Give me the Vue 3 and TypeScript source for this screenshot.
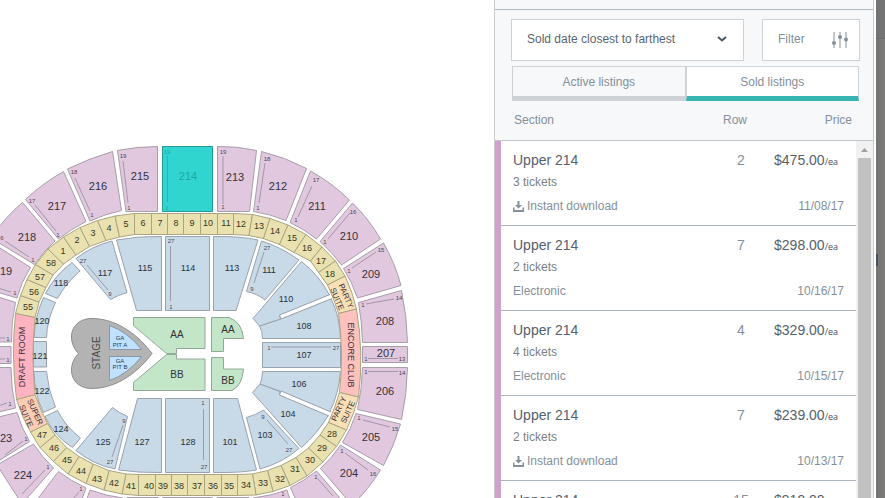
<script setup lang="ts">
import { ref } from 'vue'

type Point = [number, number]
type Kind = 'upper' | 'suite' | 'lower' | 'floor'
interface Label { text: string; x: number; y: number; kind: Kind | 'seat' | 'lounge' | 'club' | 'hall' | 'pit'; turn?: number }
interface Listing { section: string; tickets: string; delivery: string; row: number; price: string; date: string }

const sort = ref('Sold date closest to farthest')
const tab = ref<'active' | 'sold'>('sold')

const listings: Listing[] = [
  { section: 'Upper 214', tickets: '3 tickets', delivery: 'Instant download', row: 2, price: '$475.00', date: '11/08/17' },
  { section: 'Upper 214', tickets: '2 tickets', delivery: 'Electronic', row: 7, price: '$298.00', date: '10/16/17' },
  { section: 'Upper 214', tickets: '4 tickets', delivery: 'Electronic', row: 4, price: '$329.00', date: '10/15/17' },
  { section: 'Upper 214', tickets: '2 tickets', delivery: 'Instant download', row: 7, price: '$239.00', date: '10/13/17' },
  { section: 'Upper 214', tickets: '2 tickets', delivery: 'Electronic', row: 15, price: '$919.00', date: '10/12/17' },
]

const upper: string[] = [
  'M117.5 150.5Q137 146.5 157.5 146.5V211.5H126Z',
  'M67.5 169Q90 158 112.5 151.5L121.5 210.5Q105 214 90 221Z',
  'M25.5 199.5Q43 183 63.5 171.5L86 221.5Q71 229 58.5 239Z',
  'M22.5 202.5L55 241Q43 252 34.5 264.5L-9 238Q5 217 22.5 202.5Z',
  'M-14 241L0 248L30.5 267.5Q21 282 17 298L-10 290Z',
  'M-10 294L0 297.5L15.5 302.5Q11 322 11.5 342H-10Z',
  'M-10 346.5H11V363.5H-10Z',
  'M-10 367.5H11Q11 388 15.5 408L-10 414Z',
  'M-10 419L17 412.5Q21 427 29.5 441.5L-3 462Z',
  'M33.5 444Q42 457 53.5 468L22 504L-3 465Z',
  'M58.5 471.5Q71 481 86 488L80 505H33Z',
  'M90 490Q106 496 123 498V510H83Z',
  'M127 497.5H158V510H127Z',
  'M162.5 497.5H212.5V510H162.5Z',
  'M217.5 497.5H249V510H217.5Z',
  'M253 498Q270 496 287 490L293 510H253Z',
  'M290.5 487.5Q304 481 316.5 471L346 505H298Z',
  'M340.5 445L380.5 470Q369 489 352 505L320.5 468.5Q332 458 340.5 445Z',
  'M356 413.5L400.5 424Q394 446 383.5 465.5L342.5 442.5Q351 429 356 413.5Z',
  'M362.5 367.5H407.5Q407 394 401.5 419.5L357.5 409.5Q362 389 362.5 367.5Z',
  'M362.5 346.5H407.5V362.5H362.5Z',
  'M401.5 290.5Q407 316 407.5 342.5H362.5Q362 322 358.5 302.5Z',
  'M383.5 243Q395 263 401 285.5L357.5 298Q352 282 343.5 268.5Z',
  'M352.5 203Q369 219 380.5 239L341.5 265Q332 252 320 241.5Z',
  'M310.5 171Q332 183 349.5 200L316.5 239Q304 229 290 222.5Z',
  'M261.5 151.5Q285 157 306.5 168.5L286 220.5Q270 214 253.5 211.5Z',
  'M217.5 146.5Q237 146 256.5 150.5L249.5 211.5H217.5Z',
]

const lower: string[] = [
  'M116.5 240Q138 236 161.5 236.5V310.5H136.5Z',
  'M165.5 236.5H209.5V310.5H165.5Z',
  'M213.5 236.5Q240 236 258 240L236 310.5H213.5Z',
  'M76 258.5Q92 246 112 241L127 292.5Q118 295 110.5 299.5Z',
  'M72 262.5L80 271Q66 283 57.5 298.5L45.5 293.5Q55 275 72 262.5Z',
  'M43.5 297.5L55.5 302.5Q47 320 46.5 337.5H34Q35 316 43.5 297.5Z',
  'M33.5 341.5H46.5V367H33.5Z',
  'M34 371.5H46.5Q48 390 55.5 407L43.5 412.5Q34 394 34 371.5Z',
  'M45 416.5L57.5 410.5Q65 426 80.5 438L72.5 447.5Q54 436 45 416.5Z',
  'M76 450.5L112.5 407.5Q119 413 127.5 416.5L115 469Q94 465 76 450.5Z',
  'M137.5 398.5H161.5V472.5Q140 473 118.5 470Z',
  'M165.5 398.5H209.5V472.5H165.5Z',
  'M213.5 398.5H237.5L256.5 470Q240 473 213.5 472.5Z',
  'M246.5 417.5Q256 415 263.5 410L299 448.5Q282 463 260 469Z',
  'M260 384L252.5 392.5L301.5 447.5Q317 434 328.5 415L279.5 394.5L280 391.5Z',
  'M262.5 371.5H340.5Q339 393 329.5 412.5L281 391.5L260 384Q262.5 378 262.5 371.5Z',
  'M262.5 342.5H340.5V367.5H262.5Z',
  'M259.5 326L280.5 319L331 298.5Q340 317 340.5 338.5H262.5Q262.5 331 259.5 326Z',
  'M301.5 261.5Q319 275 329.5 295L279.5 315.5L280.5 319L259.5 326L253 318.5Z',
  'M261.5 241Q281 247 299 260L265 300Q257 293.5 246.5 291.5Z',
]

const floor: string[] = [
  'M133.5 317.5H205V348.5H176.5V353.5H166.5L133.5 325.5Z',
  'M166.5 354.5H176.5V359H205V390.5H133.5V382.5Z',
  'M211.5 317.5H229Q242 322 243.5 338.5H223.5V351.5H211.5Z',
  'M211.5 357.5H223.5V369H243.5Q242 386 232 390.5H211.5Z',
]

// Dividers of the suite ring, clockwise, as outer and inner end points.
const dividers: [Point, Point][] = [
  [[15.5, 313.5], [35, 317.5]], [[20.5, 295.5], [39, 302]], [[27, 279.5], [46, 287.5]], [[35.5, 264.5], [53, 275]],
  [[48, 249], [63.5, 264]], [[63.5, 237], [76, 255]], [[80, 227.5], [89.5, 246.5]], [[97.5, 220.5], [106, 240.5]],
  [[115, 216], [119.5, 237]], [[134.5, 213.5], [134.5, 234.5]], [[151.5, 213.5], [151.5, 234.5]], [[167.5, 213.5], [167.5, 234.5]],
  [[183.5, 213.5], [183.5, 234.5]], [[200.5, 213.5], [200.5, 234.5]], [[217.5, 213.5], [217.5, 234.5]], [[233.5, 213.5], [233.5, 234.5]],
  [[252.5, 214.5], [249, 235.5]], [[270, 218.5], [263.5, 238.5]], [[288, 225], [279.5, 244.5]], [[306, 234.5], [294, 252.5]],
  [[322, 247], [310.5, 261]], [[335.5, 261], [318.5, 272.5]], [[345, 276], [327.5, 285]], [[356.5, 309], [338.5, 313.5]],
  [[358.5, 397], [339.5, 392.5]], [[346.5, 430], [328.5, 422.5]], [[336.5, 446.5], [320, 435]], [[323, 462], [308.5, 448]],
  [[307, 476], [296, 457.5]], [[290, 485.5], [281, 465.5]], [[273, 491.5], [267.5, 470.5]], [[256, 495], [252.5, 474]],
  [[237.5, 495.5], [237.5, 474.5]], [[221.5, 495.5], [221.5, 474.5]], [[204.5, 495.5], [204.5, 474.5]], [[187.5, 495.5], [187.5, 474.5]],
  [[171.5, 495.5], [171.5, 474.5]], [[155.5, 495.5], [155.5, 474.5]], [[138.5, 495.5], [138.5, 474.5]], [[122, 494], [126, 474]],
  [[104, 490], [109, 470.5]], [[86, 483.5], [93, 464]], [[68, 474], [79, 456.5]], [[53.5, 461.5], [66.5, 447.5]],
  [[40, 447.5], [55, 435]], [[30.5, 432], [47.5, 423.5]], [[16.5, 399.5], [35, 394.5]],
]
const special: Record<number, string> = { 22: 'party', 23: 'encore', 24: 'party', 45: 'super', 46: 'draft' }
const bulge: Record<number, [Point, Point]> = {
  22: [[352.5, 291.5], [334, 298.5]],
  23: [[364, 353], [344, 353]],
  24: [[354, 414], [335, 408]],
  45: [[22, 417], [40, 409]],
  46: [[11, 356], [31, 356]],
}
const ring = dividers.map(([o, i], n) => {
  const [o2, i2] = dividers[(n + 1) % dividers.length]
  const b = bulge[n]
  return {
    kind: special[n] ?? 'suite',
    d: b
      ? `M${o}Q${b[0]} ${o2}L${i2}Q${b[1]} ${i}Z`
      : `M${o}L${o2}L${i2}L${i}Z`,
  }
})

const rowLines: string[] = [
  'M123 161L128 203', 'M75 178L90 211', 'M35 205L56 231', 'M5 241L29 257', 'M-2 288L11 292', 'M-2 338H5', 'M-2 359H5',
  'M-2 406L7 403', 'M5 455L23 441', 'M22 494L45 470', 'M72 500L79 492', 'M223 156V204', 'M265 163L259 203',
  'M312 186L298 217', 'M350 213L328 239', 'M376 252L352 268', 'M394 299L366 304', 'M368 358.5H398', 'M368 371.5H398', 'M363 420L390 427',
  'M345 453L368 470', 'M318 479L333 496', 'M170.5 246V301', 'M87 265L108 290', 'M264 252L254 283', 'M271 347H331',
  'M203.5 409V460', 'M123 425L112 457', 'M267 420L288 444',
]

const labels: Label[] = [
  ...([
    ['214', 188, 176], ['215', 140, 176], ['216', 98, 186], ['217', 57, 206], ['218', 27, 237], ['19', 6, 271], ['213', 235, 177],
    ['212', 278, 186], ['211', 317, 206], ['210', 349, 236], ['209', 371, 274], ['208', 385, 321], ['207', 386, 353], ['206', 385, 391],
    ['205', 371, 437], ['204', 349, 473], ['23', 6, 438], ['224', 23, 475],
  ] as [string, number, number][]).map(([text, x, y]): Label => ({ text, x, y, kind: 'upper' })),
  ...([
    ['115', 145, 268], ['114', 188, 268], ['113', 232, 268], ['117', 105, 273], ['118', 61, 283], ['120', 42, 321], ['121', 40, 356],
    ['122', 42, 391], ['124', 61, 429], ['125', 103, 442], ['127', 142, 442], ['128', 188, 442], ['101', 230, 442], ['103', 265, 435],
    ['104', 288, 414], ['106', 299, 384], ['107', 304, 355], ['108', 304, 326], ['110', 286, 299], ['111', 269, 270],
  ] as [string, number, number][]).map(([text, x, y]): Label => ({ text, x, y, kind: 'lower' })),
  ...([
    ['55', 28, 307], ['56', 34, 292], ['57', 40, 277], ['58', 51, 263], ['1', 63, 251], ['2', 77, 240], ['3', 93, 233], ['4', 109, 228],
    ['5', 126, 224], ['6', 143, 223], ['7', 160, 223], ['8', 176, 223], ['9', 192, 223], ['10', 208, 223], ['11', 226, 223], ['12', 241, 224],
    ['13', 259, 226], ['14', 275, 231], ['15', 292, 238], ['16', 307, 248], ['17', 321, 261], ['18', 330, 274], ['28', 332, 434],
    ['29', 322, 448], ['30', 310, 460], ['31', 295, 469], ['32', 280, 479], ['33', 263, 483], ['34', 246, 485], ['35', 229, 486],
    ['36', 213, 486], ['37', 197, 486], ['38', 179, 486], ['39', 163, 486], ['40', 149, 486], ['41', 131, 486], ['42', 114, 483],
    ['43', 97, 479], ['44', 81, 471], ['45', 67, 460], ['46', 54, 448], ['47', 42, 435],
  ] as [string, number, number][]).map(([text, x, y]): Label => ({ text, x, y, kind: 'suite' })),
  ...([
    ['19', 167, 152], ['1', 167, 208], ['19', 123, 156], ['1', 129, 208], ['18', 74, 172], ['1', 92, 215], ['17', 32, 201], ['1', 58, 235],
    ['6', 2, 238], ['1', 33, 260], ['1', 15, 293], ['1', 8, 339], ['1', 8, 360], ['1', 10, 404], ['1', 26, 439], ['1', 48, 467], ['1', 81, 489],
    ['19', 223, 152], ['1', 223, 207], ['18', 267, 159], ['1', 258, 208], ['17', 316, 180], ['1', 296, 220], ['16', 353, 212], ['1', 325, 242],
    ['15', 381, 250], ['1', 349, 271], ['14', 399, 298], ['1', 363, 305], ['1', 366, 359], ['13', 402, 359], ['1', 366, 372], ['14', 402, 373],
    ['1', 359, 418], ['15', 395, 429], ['1', 342, 451], ['16', 373, 474], ['1', 316, 477], ['1', 283, 494], ['27', 171, 241], ['1', 171, 307],
    ['27', 83, 261], ['9', 110, 294], ['27', 267, 248], ['9', 252, 289], ['1', 269, 348], ['27', 336, 348], ['1', 203, 403], ['27', 204, 467],
    ['9', 124, 421], ['27', 110, 462], ['9', 263, 417], ['27', 289, 450],
  ] as [string, number, number][]).map(([text, x, y]): Label => ({ text, x, y, kind: 'seat' })),
  { text: 'AA', x: 177, y: 334, kind: 'floor' },
  { text: 'BB', x: 177, y: 374, kind: 'floor' },
  { text: 'AA', x: 228, y: 329, kind: 'floor' },
  { text: 'BB', x: 228, y: 380, kind: 'floor' },
  { text: 'STAGE', x: 96, y: 353, kind: 'hall', turn: -90 },
  { text: 'DRAFT ROOM', x: 22, y: 357, kind: 'club', turn: -90 },
  { text: 'ENCORE CLUB', x: 351, y: 355, kind: 'club', turn: 90 },
  { text: 'PARTY', x: 346, y: 296, kind: 'lounge', turn: 66 },
  { text: 'SUITE', x: 337, y: 299, kind: 'lounge', turn: 66 },
  { text: 'PARTY', x: 339, y: 409, kind: 'lounge', turn: -66 },
  { text: 'SUITE', x: 348, y: 412, kind: 'lounge', turn: -66 },
  { text: 'SUPER', x: 35, y: 412, kind: 'lounge', turn: 66 },
  { text: 'SUITE', x: 26, y: 416, kind: 'lounge', turn: 66 },
  { text: 'GA', x: 120, y: 338, kind: 'pit' },
  { text: 'PIT A', x: 120, y: 345, kind: 'pit' },
  { text: 'GA', x: 120, y: 361, kind: 'pit' },
  { text: 'PIT B', x: 120, y: 367, kind: 'pit' },
]
</script>

<template>
  <div class="page">
    <main class="map">
      <svg viewBox="0 0 494 498" preserveAspectRatio="xMinYMin slice" role="img" aria-label="Seating map">
        <g class="upper"><path v-for="d in upper" :key="d" :d="d" /></g>
        <path class="chosen" d="M162.5 146.5H212.5V211.5H162.5Z" />
        <path class="chosen-line" d="M167.500 156V202" />
        <g class="lower"><path v-for="d in lower" :key="d" :d="d" /></g>
        <path class="aisle" d="M330 294.500L279.500 315L281 319L332 298.500M329 416L279.500 395L281 391L331 412" />
        <g class="ring"><path v-for="c in ring" :key="c.d" :class="c.kind" :d="c.d" /></g>
        <g class="floor"><path v-for="d in floor" :key="d" :d="d" /></g>
        <path class="stage" d="M152 353.500C140 337 118 318.500 92 318.500C70 318.500 66 341 78.500 353.500C66 366 70 388.500 92 388.500C118 388.500 140 370 152 353.500Z" />
        <path class="pit" d="M109.500 325.500Q128 332 141.500 349.500H109.500ZM109.500 380.500Q128 374 141.500 356.500H109.500Z" />
        <g class="lines"><path v-for="d in rowLines" :key="d" :d="d" /></g>
        <text
          v-for="(l, n) in labels"
          :key="n"
          :class="['label', `label-${l.kind}`, { 'on-chosen': l.x > 160 && l.x < 200 && l.y < 210 }]"
          :x="l.x"
          :y="l.y"
          :transform="l.turn ? `rotate(${l.turn} ${l.x} ${l.y})` : undefined"
        >{{ l.text }}</text>
      </svg>
    </main>

    <aside class="panel">
      <div class="panel-top"></div>
      <div class="controls">
        <div class="sort">
          <select v-model="sort" aria-label="Sort listings">
            <option>Sold date closest to farthest</option>
            <option>Sold date farthest to closest</option>
          </select>
          <svg class="chevron" viewBox="0 0 10 6" aria-hidden="true"><path d="M1 1L5 4.500L9 1" /></svg>
        </div>
        <button class="filter" type="button">
          Filter
          <svg viewBox="0 0 16 16" aria-hidden="true">
            <path d="M2 0V16M8 0V16M14 0V16" />
            <circle cx="2" cy="11" r="2" /><circle cx="8" cy="5" r="2" /><circle cx="14" cy="7.500" r="2" />
          </svg>
        </button>
      </div>
      <div class="tabs" role="tablist">
        <button type="button" role="tab" :aria-selected="tab === 'active'" :class="{ on: tab === 'active' }" @click="tab = 'active'">Active listings</button>
        <button type="button" role="tab" :aria-selected="tab === 'sold'" :class="{ on: tab === 'sold' }" @click="tab = 'sold'">Sold listings</button>
      </div>
      <div class="results">
        <table>
          <colgroup><col /><col class="col-row" /><col class="col-price" /></colgroup>
          <thead>
            <tr><th class="h-section">Section</th><th>Row</th><th class="h-price">Price</th></tr>
          </thead>
          <tbody>
            <tr v-for="(item, n) in listings" :key="n">
              <td class="c-section">
                <div class="cell">
                  <div class="title">{{ item.section }}</div>
                  <div class="tickets">{{ item.tickets }}</div>
                  <div class="delivery">
                    <svg v-if="item.delivery === 'Instant download'" viewBox="0 0 11 11" aria-hidden="true">
                      <path d="M4.500 0H6.500V4H9L5.500 7.500L2 4H4.500ZM0 6.500H1.500V9H9.500V6.500H11V11H0Z" />
                    </svg>
                    {{ item.delivery }}
                  </div>
                </div>
              </td>
              <td><div class="cell number">{{ item.row }}</div></td>
              <td>
                <div class="cell money">
                  <div class="price">{{ item.price }}<small>/ea</small></div>
                  <div class="date">{{ item.date }}</div>
                </div>
              </td>
            </tr>
          </tbody>
        </table>
        <div class="track" aria-hidden="true">
          <svg viewBox="0 0 7 4"><path d="M0 4L3.500 0L7 4Z" /></svg>
          <div class="thumb"></div>
        </div>
      </div>
    </aside>
    <div class="backdrop" aria-hidden="true"><div class="backdrop-head"></div><div class="backdrop-mark"></div></div>
  </div>
</template>

<style>
body {
  margin: 0;
  overflow: hidden;
}
</style>

<style scoped>
.page {
  display: flex;
  height: 100vh;
  overflow: hidden;
  background: #fff;
  color: #84909b;
  font: 12px/20px "Liberation Sans", Arial, sans-serif;
}
.map {
  flex: 1;
  min-width: 0;
  overflow: hidden;
}
.map svg {
  display: block;
  width: 100%;
  height: 100%;
}
.map path {
  stroke: #a79eab;
  stroke-width: 1;
}
.upper { fill: #e1c8df; }
.map .chosen {
  fill: #31d5d0;
  stroke: #259a98;
}
.map .chosen-line { stroke: #28b5b1; }
.ring path { stroke: #aaa580; }
.suite { fill: #e9e2b0; }
.party { fill: #f9dfb6; }
.encore { fill: #ffc1bb; }
.draft { fill: #ffb3c1; }
.super { fill: #fccdb5; }
.lower { fill: #c8d9e8; }
.lower path { stroke: #98a3ad; }
.floor { fill: #c3e6c8; }
.floor path { stroke: #94a898; }
.map .aisle {
  fill: #fff;
  stroke: #98a3ad;
}
.map .stage {
  fill: #b3b3b3;
  stroke: #8d8d8d;
}
.map .pit {
  fill: #bfe1ff;
  stroke: #8797a5;
}
.lines path {
  stroke: #88838f;
  opacity: 0.7;
}
.label {
  fill: #35313a;
  text-anchor: middle;
  dominant-baseline: central;
}
.label-upper { font-size: 11px; }
.label-lower { font-size: 9px; fill: #26333f; }
.label-suite { font-size: 9px; fill: #38351f; }
.label-floor { font-size: 10px; }
.label-club { font-size: 9px; }
.label-hall { font-size: 10px; fill: #4a4a4a; }
.label-lounge { font-size: 8px; }
.label-seat { font-size: 6px; fill: #4b4652; }
.label-pit { font-size: 6px; fill: #2b3b4a; }
.label.on-chosen { fill: #1fa5a3; }

.panel {
  display: flex;
  flex-direction: column;
  flex: none;
  width: 378px;
  background: #f7f8fa;
  border: solid #c8cacd;
  border-width: 0 1px;
}
.panel-top {
  flex: none;
  height: 9px;
  border-bottom: 1px solid #b1bac3;
}
.controls {
  display: flex;
  gap: 18px;
  padding: 9px 13px 0 16px;
}
.sort {
  position: relative;
  flex: 1;
}
select,
.filter {
  box-sizing: border-box;
  width: 100%;
  height: 42px;
  margin: 0;
  border: 1px solid #cdd2d7;
  border-radius: 0;
  background: #fff;
  font: inherit;
}
select {
  display: block;
  appearance: none;
  padding: 0 32px 2px 15px;
  color: #5a6570;
}
.chevron {
  position: absolute;
  top: 17px;
  right: 17px;
  width: 10px;
  height: 6px;
  fill: none;
  stroke: #4b555f;
  stroke-width: 2;
  pointer-events: none;
}
.filter {
  display: flex;
  align-items: center;
  justify-content: space-between;
  width: 98px;
  padding: 0 11px 2px 15px;
  color: #84909b;
}
.filter svg {
  width: 16px;
  height: 16px;
  margin-top: 2px;
  fill: #84909b;
  stroke: #84909b;
}
.filter circle { stroke: none; }
.tabs {
  display: flex;
  padding: 5px 14px 0 17px;
}
.tabs button {
  flex: 1;
  height: 35px;
  margin: 0;
  padding: 0;
  border: 1px solid #cdd2d7;
  border-bottom: 5px solid #cdd2d7;
  background: #f7f8fa;
  color: #84909b;
  font: inherit;
}
.tabs button.on {
  border-bottom-color: #37b4b1;
  background: #fff;
}
.results {
  display: flex;
  flex: 1;
  min-height: 0;
  overflow: hidden;
}
table {
  flex: 1;
  align-self: flex-start;
  table-layout: fixed;
  border-spacing: 0;
}
.col-row { width: 70px; }
.col-price { width: 86px; }
th {
  height: 38px;
  padding: 0 0 1px;
  border-bottom: 1px solid #c3c7cb;
  font-weight: normal;
}
.h-section {
  padding-left: 19px;
  text-align: left;
}
.h-price {
  padding-right: 4px;
  text-align: right;
}
td {
  padding: 0;
  background: #fff;
  vertical-align: top;
}
.c-section {
  padding-left: 6px;
  background: #cda2cb;
}
.cell {
  height: 77px;
  padding-top: 7px;
  border-bottom: 1px solid #adb7c1;
  background: #fff;
}
.c-section .cell { padding-left: 12px; }
.title,
.number,
.price {
  font-size: 14px;
  line-height: 24px;
}
.title,
.price { color: #56616c; }
.tickets { color: #7b7f83; }
.delivery {
  display: flex;
  align-items: center;
  gap: 3px;
  line-height: 28px;
}
.delivery svg {
  width: 11px;
  height: 11px;
  fill: #84909b;
}
.number {
  padding-left: 12px;
  text-align: center;
}
.money { text-align: right; }
.price { padding-right: 18px; }
.price small {
  color: #46505a;
  font: 9px/12px "Open Sans", sans-serif;
}
.date {
  padding: 20px 12px 0 0;
  line-height: 28px;
}
.track {
  flex: none;
  width: 17px;
  margin-top: 39px;
  border-top: 1px solid #c3c7cb;
  background: #f1f1f1;
}
.track svg {
  display: block;
  width: 7px;
  height: 4px;
  margin: 7px auto 6px;
  fill: #a0a0a0;
}
.thumb {
  height: 100%;
  margin: 0 2px;
  background: #c1c1c1;
}
.backdrop {
  flex: none;
  width: 9px;
  margin-left: 2px;
  background: linear-gradient(to right, #727472, #7d7c7a);
}
.backdrop-head {
  height: 38px;
  border-bottom: 1px solid #6b6b6b;
  background: #737373;
}
.backdrop-mark {
  width: 2px;
  height: 12px;
  margin-top: 215px;
  background: #435266;
}
</style>
